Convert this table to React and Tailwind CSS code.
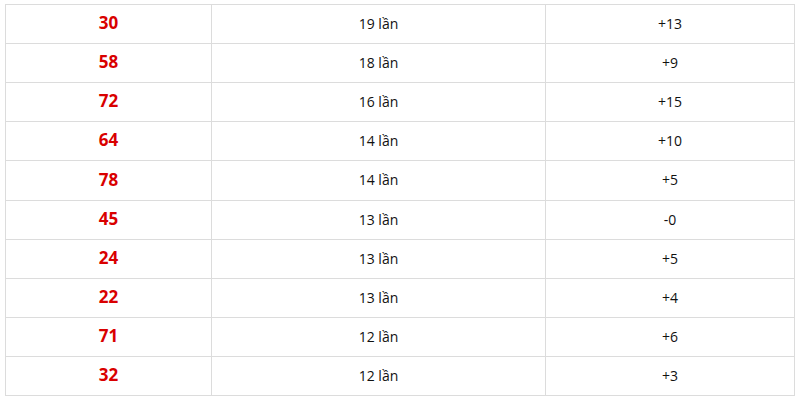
const rows = [
  ["30", "19 lần", "+13"],
  ["58", "18 lần", "+9"],
  ["72", "16 lần", "+15"],
  ["64", "14 lần", "+10"],
  ["78", "14 lần", "+5", true],
  ["45", "13 lần", "-0"],
  ["24", "13 lần", "+5"],
  ["22", "13 lần", "+4"],
  ["71", "12 lần", "+6"],
  ["32", "12 lần", "+3"],
];

export default function App() {
  return (
    <div className="w-[800px] h-[400px] bg-white pt-[4px] px-[5px] font-['Open_Sans',sans-serif]">
      <table className="w-[790px] border-collapse border border-[#dcdcdc]">
        <tbody>
          {rows.map(([num, times, diff, tall]) => (
            <tr key={num + times} className={tall ? "h-[40px]" : "h-[39px]"}>
              <td className="w-[206px] border border-[#dcdcdc] text-center text-[17px] font-bold text-[#d90000] p-0 pb-[2px]">
                {num}
              </td>
              <td className="w-[334px] border border-[#dcdcdc] text-center text-[14px] text-[#111] p-0 pb-[2px]">
                {times}
              </td>
              <td className="border border-[#dcdcdc] text-center text-[14px] text-[#111] p-0 pb-[2px]">
                {diff}
              </td>
            </tr>
          ))}
        </tbody>
      </table>
    </div>
  );
}
